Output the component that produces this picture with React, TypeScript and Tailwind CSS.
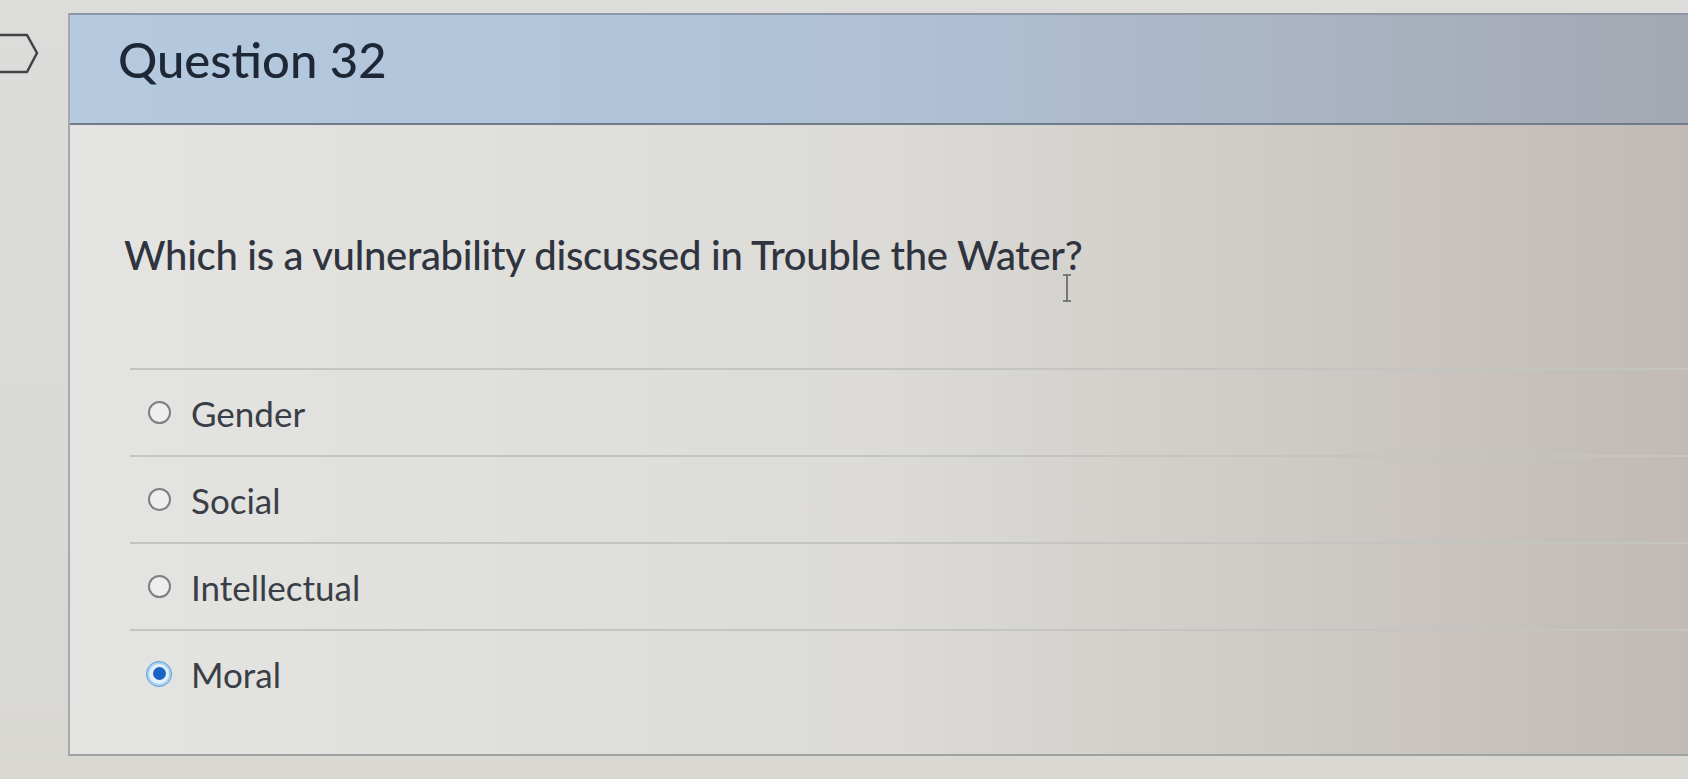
import React from "react";

const options = [
  { label: "Gender", selected: false },
  { label: "Social", selected: false },
  { label: "Intellectual", selected: false },
  { label: "Moral", selected: true },
];

function Radio({ selected }: { selected: boolean }) {
  if (selected) {
    return (
      <span className="flex h-[26px] w-[26px] shrink-0 items-center justify-center rounded-full bg-[#a9d2f2] border border-[#5a9fd8]">
        <span className="flex h-[20px] w-[20px] items-center justify-center rounded-full bg-[#e6f0f8]">
          <span className="h-[13px] w-[13px] rounded-full bg-[#1a64c4]" />
        </span>
      </span>
    );
  }
  return (
    <span className="flex h-[26px] w-[26px] shrink-0 items-center justify-center">
      <span className="h-[23px] w-[23px] rounded-full border-2 border-[#7d7f82] bg-[#eeeeec]" />
    </span>
  );
}

export default function App() {
  return (
    <div
      className="relative flex h-[779px] w-[1688px] overflow-hidden bg-linear-to-b from-[#dcdcda] to-[#d9d8d3]"
      style={{ fontFamily: "Lato, 'Open Sans', 'Noto Sans', sans-serif" }}
    >
      {/* left gutter with flag */}
      <div className="w-[68px] shrink-0 pt-[32px]">
        <svg width="40" height="44" viewBox="0 0 40 44" className="block">
          <path
            d="M-4 3 H27 L37 21 L27 40 H-4"
            fill="none"
            stroke="#3f4347"
            strokeWidth="2.5"
            strokeLinejoin="round"
          />
        </svg>
      </div>

      {/* main card column */}
      <div className="flex flex-1 flex-col pt-[13px]">
        <div className="flex h-[743px] flex-col border-l-2 border-t-2 border-b-2 border-l-[#a3a9ad] border-t-[#8e98a4] border-b-[#9ea2a3] bg-linear-to-r from-[#e4e4e2] via-[#dcdbd7] to-[#c1bab5]">
          {/* header */}
          <div className="flex h-[110px] shrink-0 items-start border-b-2 border-[#6f7d8b] bg-linear-to-r from-[#b5cadf] via-[#b0c1d6] to-[#a4a8b2] pl-[48px] pt-[14px]">
            <h1 className="text-[49px] font-medium leading-[60px] text-[#1d2736]">Question 32</h1>
          </div>

          {/* body */}
          <div className="relative flex flex-1 flex-col">
            <p className="ml-[54px] mt-[106px] text-[40px] font-medium leading-[48px] tracking-[-0.3px] text-[#2f343e]">
              Which is a vulnerability discussed in Trouble the Water?
            </p>

            {/* text cursor */}
            <svg
              width="14"
              height="30"
              viewBox="0 0 14 30"
              className="absolute left-[990px] top-[148px]"
            >
              <path d="M3 2 H11 M7 2 V28 M3 28 H11" fill="none" stroke="#5d6166" strokeWidth="1.6" />
            </svg>

            <div className="ml-[60px] mt-[89px] flex flex-col">
              {options.map((o) => (
                <div
                  key={o.label}
                  className="flex h-[87px] items-center gap-[19px] border-t-2 border-[#c4c4c1] pl-[16px]"
                >
                  <Radio selected={o.selected} />
                  <span className="text-[35px] leading-[40px] text-[#3a3e46]">{o.label}</span>
                </div>
              ))}
            </div>
          </div>
        </div>
      </div>
    </div>
  );
}
